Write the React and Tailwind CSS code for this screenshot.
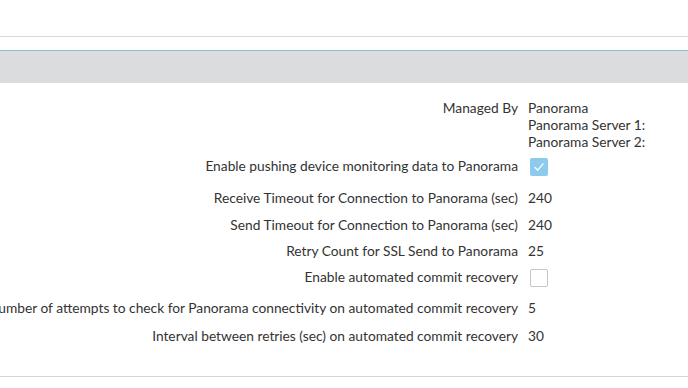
import React from "react";

function Label({ children, className = "" }) {
  return (
    <div className="w-[518px] shrink-0 flex justify-end overflow-visible">
      <span className={"whitespace-nowrap shrink-0 " + className}>{children}</span>
    </div>
  );
}

function Row({ label, children, h = "h-[27px]", mt = "", labelClass = "" }) {
  return (
    <div className={"flex items-center " + h + " " + mt}>
      <Label className={labelClass}>{label}</Label>
      <div className="pl-[10px] flex items-center">{children}</div>
    </div>
  );
}

export default function App() {
  return (
    <div
      className="w-[688px] h-[388px] overflow-hidden bg-white text-[13.75px] text-[#333333]"
      style={{ fontFamily: "Lato, 'Open Sans', sans-serif" }}
    >
      <div className="h-[37px] border-b border-[#d9d9d9]" />
      <div className="h-[13px]" />
      <div className="h-[33px] border-t border-[#86c1d6] bg-[#dadcdd]" />
      <div className="pt-[16px]">
        <div className="flex leading-[17px]">
          <Label>Managed By</Label>
          <div className="pl-[10px] flex flex-col">
            <span>Panorama</span>
            <span>Panorama Server 1:</span>
            <span>Panorama Server 2:</span>
          </div>
        </div>
        <Row label="Enable pushing device monitoring data to Panorama" mt="mt-[3px]">
          <div className="ml-[2px] w-[18px] h-[18px] rounded-[2px] bg-[#8ccbee] flex items-center justify-center">
            <svg width="12" height="12" viewBox="0 0 12 12" fill="none">
              <path d="M2 6.5 L4.8 9.2 L10 2.8" stroke="white" strokeWidth="1.3" strokeLinecap="round" strokeLinejoin="round" />
            </svg>
          </div>
        </Row>
        <Row label="Receive Timeout for Connection to Panorama (sec)" mt="mt-[5px]">240</Row>
        <Row label="Send Timeout for Connection to Panorama (sec)">240</Row>
        <Row label="Retry Count for SSL Send to Panorama" h="h-[25px]">25</Row>
        <Row label="Enable automated commit recovery">
          <div className="ml-[2px] w-[18px] h-[18px] rounded-[2px] bg-white border border-[#c6c6c6]" />
        </Row>
        <Row label="Number of attempts to check for Panorama connectivity on automated commit recovery" mt="mt-[4px]">5</Row>
        <Row label="Interval between retries (sec) on automated commit recovery" mt="mt-[1px]">30</Row>
        <div className="h-[27px] border-b border-[#d6d6d6]" />
      </div>
    </div>
  );
}
